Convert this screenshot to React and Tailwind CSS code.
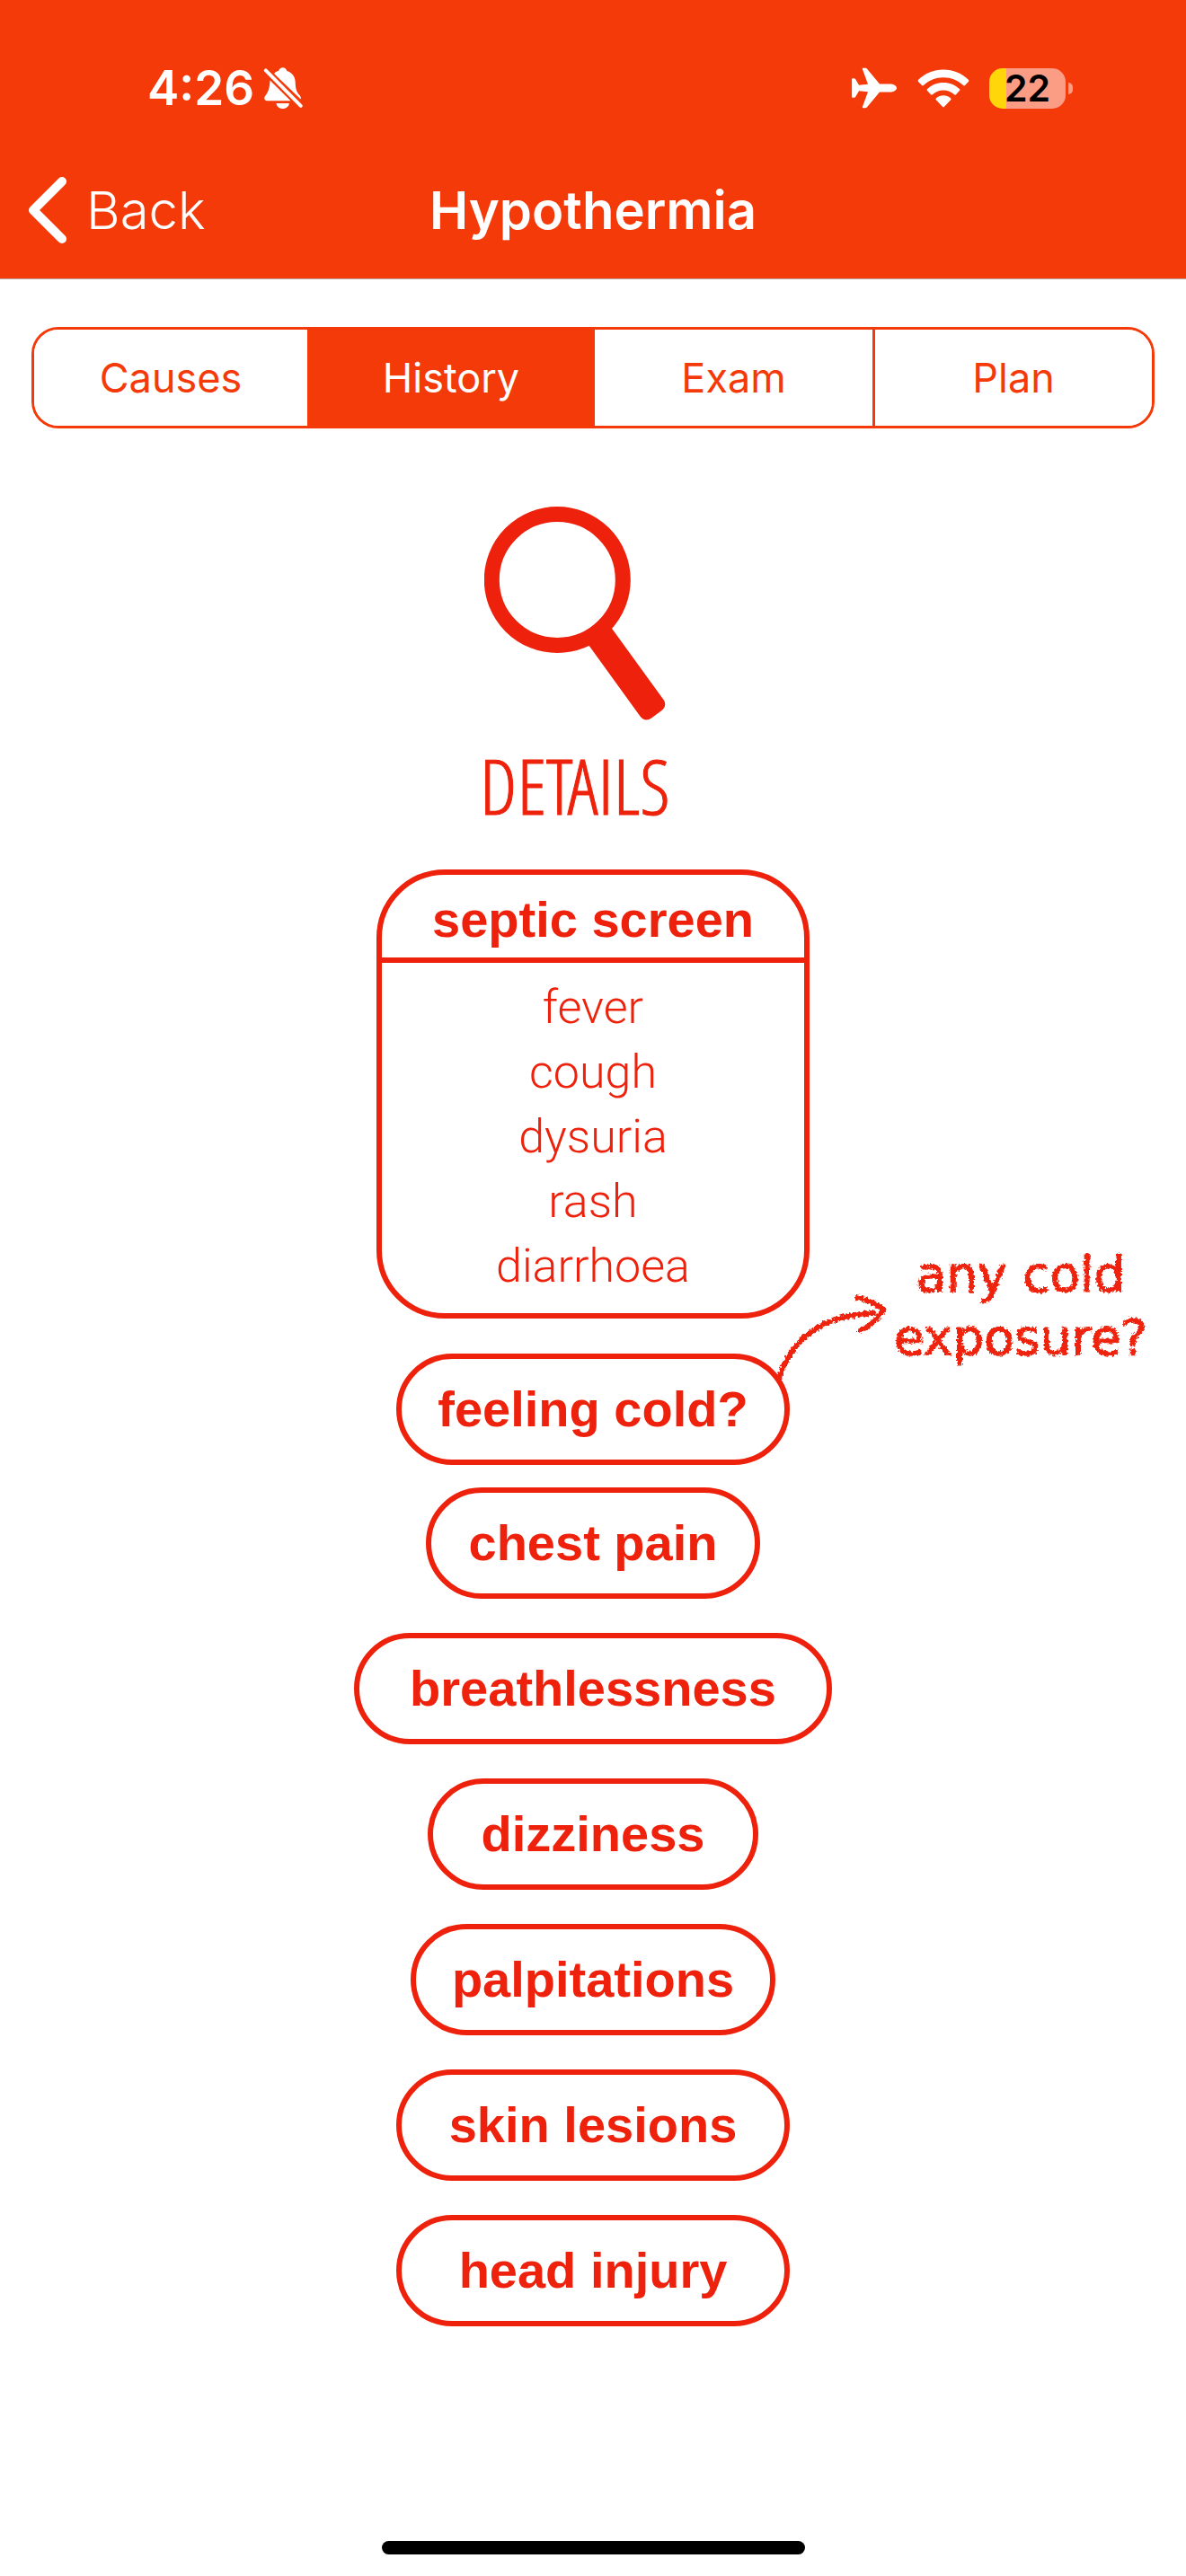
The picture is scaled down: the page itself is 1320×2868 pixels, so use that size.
const TABS = ["Causes", "History", "Exam", "Plan"];
const SCREEN = ["fever", "cough", "dysuria", "rash", "diarrhoea"];
const SYMPTOMS = [
  { name: "chest pain", width: "w-[372px]" },
  { name: "breathlessness", width: "w-[532px]" },
  { name: "dizziness", width: "w-[368px]" },
  { name: "palpitations", width: "w-[406px]" },
  { name: "skin lesions", width: "w-[438px]" },
  { name: "head injury", width: "w-[438px]" },
];

function BellOff() {
  return (
    <svg className="h-[48px] w-[44px]" viewBox="0 0 44 48" aria-hidden="true">
      <path
        fill="#fff"
        d="M12 8C13.500 6 15.200 5.400 17 5C17.800 2.500 19.400 1.200 21.700 1.200S25.600 2.500 26.400 5C32.500 7 35.500 11.500 35.700 17.500C35.900 25 37 28.500 40.500 32C41.800 33.500 42.200 35 41.700 36.500L12 8ZM7.500 15.500L30.500 38.300H4.500C2 38.300 .8 36.500 1.400 34.600C2.300 31.500 7 29.500 7.500 15.500ZM14.500 41H28.900C28.500 44.500 25.600 47 21.700 47S14.900 44.500 14.500 41Z"
      />
      <path d="M2.800 4.300L41.800 43.800" stroke="#f53a0a" strokeWidth="7" />
      <path d="M2.800 4.300L41.800 43.800" stroke="#fff" strokeWidth="3.800" strokeLinecap="round" />
    </svg>
  );
}

function Plane() {
  return (
    <svg className="h-[46px] w-[52px]" viewBox="0 0 52 46" aria-hidden="true">
      <path
        fill="#fff"
        d="M32 18.500L18.500 2.200C17.700 1.200 17 .8 16 .8H13.700C13 .8 12.700 1.300 12.900 2L19 18.700L9 19.700L5.200 13.200C4.800 12.500 4.300 12.200 3.600 12.200H2.200C1.500 12.200 1.100 12.600 1.100 13.300V32.700C1.100 33.400 1.500 33.800 2.200 33.800H3.600C4.300 33.800 4.800 33.500 5.200 32.800L9 26.300L19 27.300L12.900 44C12.700 44.700 13 45.200 13.700 45.200H16C17 45.200 17.700 44.800 18.500 43.800L32 27.500H43.500C47.500 27.500 51 25.500 51 23S47.500 18.500 43.500 18.500Z"
      />
    </svg>
  );
}

function Wifi() {
  return (
    <svg className="h-[43px] w-[58px]" viewBox="0 0 58 43" fill="#fff" aria-hidden="true">
      <path d="M29 .5C18 .5 8.500 4.500 1.200 11.800C.5 12.500 .5 13.200 1.100 13.900L5 18C5.600 18.600 6.300 18.600 6.900 18C12.900 12.300 20.500 9.200 29 9.200S45.100 12.300 51.100 18C51.700 18.600 52.400 18.600 53 18L56.900 13.900C57.500 13.200 57.500 12.500 56.800 11.800C49.500 4.500 40 .5 29 .5Z" />
      <path d="M29 15C22 15 16 17.500 11.200 22C10.500 22.700 10.500 23.400 11.100 24.100L15 28.300C15.600 28.900 16.200 28.900 16.900 28.300C20.300 25.200 24.400 23.500 29 23.500S37.700 25.200 41.100 28.300C41.800 28.900 42.400 28.900 43 28.300L46.900 24.100C47.500 23.400 47.500 22.700 46.800 22C42 17.500 36 15 29 15Z" />
      <path d="M29 29.300C25.900 29.300 23.200 30.400 21 32.200C20.300 32.800 20.300 33.500 20.900 34.200L28 41.700C28.700 42.400 29.300 42.400 30 41.700L37.100 34.200C37.700 33.500 37.700 32.800 37 32.200C34.800 30.400 32.100 29.300 29 29.300Z" />
    </svg>
  );
}

function Battery() {
  return (
    <div className="flex items-center gap-[3px]" role="img" aria-label="Battery 22 percent">
      <div className="flex h-[45px] w-[85px] items-center justify-center rounded-[15px] bg-[linear-gradient(to_right,#ffd60a_22%,#fb9c84_22%)] text-[41px] leading-none font-semibold text-black">
        22
      </div>
      <div className="h-[13px] w-[5px] rounded-r-full bg-[#fb9c84]" />
    </div>
  );
}

function Magnifier() {
  return (
    <svg className="h-[238px] w-[202px]" viewBox="540 564 202 238" aria-hidden="true">
      <circle cx="621.300" cy="645.500" r="73" fill="none" stroke="#ee220c" strokeWidth="17" />
      <path
        fill="#ee220c"
        d="M656 718L713.500 797.500C717 802 721.500 802.500 726 799.500L737.500 791C741.500 788 742.500 783 739.500 779L681.500 699L668 696L654 707Z"
      />
    </svg>
  );
}

function Arrow() {
  return (
    <svg className="h-[96px] w-[124px] shrink-0" viewBox="864 1441 124 96" fill="none" stroke="#ee220c" strokeLinecap="round" aria-hidden="true">
      <g filter="url(#chalk)">
        <path d="M867 1534C878 1496 912 1464 972 1463" strokeWidth="6" />
        <path d="M953 1445.500C965 1449 977 1454 982 1459C977 1469 968 1477 957 1482" strokeWidth="6" />
      </g>
    </svg>
  );
}

function Pill({ width, children }) {
  return (
    <div
      className={`flex h-[124px] items-center justify-center rounded-full border-[6px] border-[#ee220c] text-[56px] leading-[60px] font-bold ${width}`}
    >
      {children}
    </div>
  );
}

export default function App() {
  return (
    <div className="flex min-h-screen flex-col bg-white font-['Inter',sans-serif]">
      <svg className="absolute h-0 w-0" aria-hidden="true">
        <filter id="chalk" x="-10%" y="-10%" width="120%" height="120%">
          <feTurbulence type="fractalNoise" baseFrequency="0.35" numOctaves="3" seed="4" result="noise" />
          <feDisplacementMap in="SourceGraphic" in2="noise" scale="6" xChannelSelector="R" yChannelSelector="G" />
        </filter>
      </svg>

      <header className="border-b border-[#b8a8a4] bg-[#f53a0a] text-white">
        <div className="flex items-center justify-between pt-[70px] pr-[126px] pl-[164px]">
          <div className="flex h-[56px] items-center gap-[10px] text-[53px] leading-none font-semibold">
            4:26
            <BellOff />
          </div>
          <div className="flex items-center gap-[22px]">
            <Plane />
            <Wifi />
            <Battery />
          </div>
        </div>
        <div className="grid h-[184px] grid-cols-[1fr_auto_1fr] items-center px-7 pt-8">
          <button type="button" className="flex items-center gap-5 justify-self-start text-[58px] leading-none font-light">
            <svg className="h-[76px] w-[48px]" viewBox="0 0 48 76" fill="none" stroke="#fff" strokeWidth="10" strokeLinecap="round" strokeLinejoin="round" aria-hidden="true">
              <path d="M41 6L9 38L41 70" />
            </svg>
            Back
          </button>
          <h1 className="text-[58px] leading-none font-semibold">Hypothermia</h1>
        </div>
      </header>

      <nav className="mx-[35px] mt-[53px] grid h-[113px] grid-cols-[307fr_317fr_312fr_308fr] divide-x-[3px] divide-[#f53a0a] overflow-hidden rounded-[30px] border-[3px] border-[#f53a0a]">
        {TABS.map((tab) => (
          <button
            key={tab}
            type="button"
            aria-pressed={tab === "History"}
            className={
              tab === "History"
                ? "bg-[#f53a0a] text-[45px] font-normal text-white"
                : "bg-white text-[45px] font-normal text-[#f53a0a]"
            }
          >
            {tab}
          </button>
        ))}
      </nav>

      <main className="flex flex-col items-center pt-[87px] font-['Liberation_Sans',sans-serif] text-[#ee220c]">
        <div className="flex flex-col items-center pr-10">
          <Magnifier />
          <h2 className="mt-7 text-[85px] leading-[88px] font-light [-webkit-text-stroke:1px_#ee220c] font-['Open_Sans_Condensed_Light','Roboto_Condensed',sans-serif]">
            DETAILS
          </h2>
        </div>

        <section className="mt-[50px] w-[482px] rounded-[76px] border-[6px] border-[#ee220c] text-center">
          <h3 className="border-b-[6px] border-[#ee220c] pt-5 pb-3 text-[56px] leading-[60px] font-bold">
            septic screen
          </h3>
          <ul className="pt-[14px] pb-4 font-['Roboto',sans-serif] text-[52px] leading-[72px] font-light">
            {SCREEN.map((item) => (
              <li key={item}>{item}</li>
            ))}
          </ul>
        </section>

        <div className="relative mt-[39px]">
          <Pill width="w-[438px]">feeling cold?</Pill>
          <div className="absolute bottom-[95px] left-[424px] flex items-end gap-[6px]">
            <Arrow />
            <p className="pb-[12px] text-center font-['DejaVu_Sans',sans-serif] text-[55px] leading-[70px] whitespace-nowrap [-webkit-text-stroke:1px_#ee220c] [filter:url(#chalk)]">
              any cold
              <br />
              exposure?
            </p>
          </div>
        </div>

        <div className="mt-[25px] flex flex-col items-center gap-[38px]">
          {SYMPTOMS.map(({ name, width }) => (
            <Pill key={name} width={width}>
              {name}
            </Pill>
          ))}
        </div>
      </main>

      <div className="mx-auto mt-auto mb-6 h-[15px] w-[471px] rounded-full bg-black" />
    </div>
  );
}
